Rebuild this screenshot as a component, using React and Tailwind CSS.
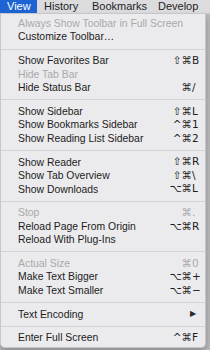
import React from 'react';

const SEP = 'sep';

// menu rows: [label, modifiers, key, disabled]
const items = [
  ['Always Show Toolbar in Full Screen', '', '', true],
  ['Customize Toolbar…', '', ''],
  SEP,
  ['Show Favorites Bar', '⇧⌘', 'B'],
  ['Hide Tab Bar', '', '', true],
  ['Hide Status Bar', '⌘', '/'],
  SEP,
  ['Show Sidebar', '⇧⌘', 'L'],
  ['Show Bookmarks Sidebar', '^⌘', '1'],
  ['Show Reading List Sidebar', '^⌘', '2'],
  SEP,
  ['Show Reader', '⇧⌘', 'R'],
  ['Show Tab Overview', '⇧⌘', '\\'],
  ['Show Downloads', '⌥⌘', 'L'],
  SEP,
  ['Stop', '⌘', '.', true],
  ['Reload Page From Origin', '⌥⌘', 'R'],
  ['Reload With Plug-Ins', '', ''],
  SEP,
  ['Actual Size', '⌘', '0', true],
  ['Make Text Bigger', '⌥⌘', '+'],
  ['Make Text Smaller', '⌥⌘', '−'],
  SEP,
  ['Text Encoding', 'submenu', ''],
  SEP,
  ['Enter Full Screen', '^⌘', 'F'],
];

function Row({ label, mods, keyChar, disabled }) {
  const color = disabled ? 'text-[#a9a9ab]' : 'text-[#1c1c1c]';
  return (
    <div className={`flex items-center h-[13.5px] pl-[17px] pr-[4px] ${color}`}>
      <span className="flex-1 whitespace-nowrap">{label}</span>
      {mods === 'submenu' ? (
        <span className="text-[8px] mr-[5px] text-[#2a2a2a]">▶</span>
      ) : (
        (mods || keyChar) && (
          <span className="flex items-center font-['DejaVu_Sans',sans-serif] text-[10.5px]">
            <span className="text-right">{mods}</span>
            <span className="w-[9px] text-left">{keyChar}</span>
          </span>
        )
      )}
    </div>
  );
}

export default function App() {
  return (
    <div className="w-[210px] h-[350px] overflow-hidden bg-[#b9babd] font-['Liberation_Sans',Arial,sans-serif] text-[10.4px] relative">
      {/* menu bar */}
      <div className="flex h-[14px] items-center bg-[#dcdcde] border-b border-[#cfcfd1] text-[#1e1e1e] text-[11px]">
        <span className="h-full flex items-center pl-[7px] bg-[#1c63d3] text-white w-[37px]">View</span>
        <span className="ml-[7px] w-[48px]">History</span>
        <span className="w-[66px]">Bookmarks</span>
        <span>Develop</span>
      </div>

      {/* dropdown panel */}
      <div className="w-[206px] bg-[#ebebed] border-x border-b border-[#c6c6c8] rounded-b-[5px] pt-[3px] pb-[2px] shadow-[0_3px_6px_rgba(0,0,0,0.25)]">
        {items.map((it, i) =>
          it === SEP ? (
            <div key={i} className="h-[10.2px] flex items-center">
              <div className="h-px w-full bg-[#d3d3d5]" />
            </div>
          ) : (
            <Row key={i} label={it[0]} mods={it[1]} keyChar={it[2]} disabled={it[3]} />
          )
        )}
      </div>
    </div>
  );
}
